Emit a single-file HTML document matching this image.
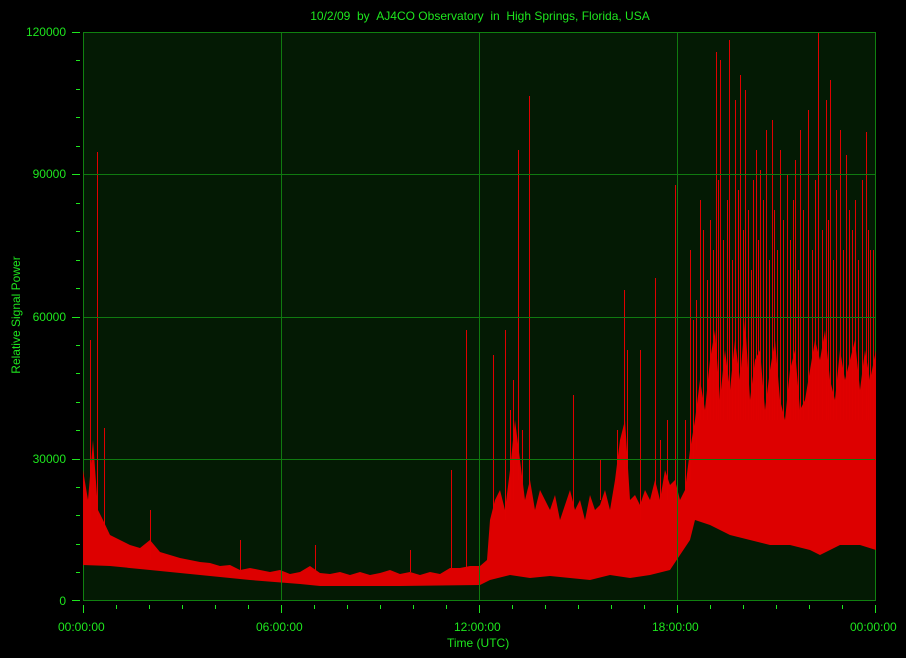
<!DOCTYPE html>
<html><head><meta charset="utf-8"><style>
html,body{margin:0;padding:0;background:#000;}
body{width:906px;height:658px;position:relative;overflow:hidden;font-family:"Liberation Sans",sans-serif;color:#1ee61e;font-size:12px;}
.t{position:absolute;white-space:nowrap;}
</style></head><body>
<svg width="906" height="658" style="position:absolute;left:0;top:0">
<rect x="83.5" y="32.5" width="792" height="568" fill="#041a04" stroke="#108010"/>
<polygon fill="#dd0000" points="83,470 88,500 93,440 98,510 103,520 110,535 120,540 130,545 140,548 150,540 160,552 170,555 180,558 190,560 200,562 210,563 220,566 230,565 240,570 250,568 260,570 270,572 280,570 290,574 300,572 310,566 320,573 330,574 340,572 350,575 360,572 370,575 380,573 390,570 400,574 410,572 420,575 430,572 440,574 450,568 460,568 470,566 480,566 487,560 490,520 495,500 500,490 505,510 510,470 515,420 520,460 525,500 530,480 535,510 540,490 545,500 550,510 555,495 560,520 565,505 570,490 575,510 580,500 585,520 590,495 595,510 600,505 605,490 610,510 615,480 620,440 625,420 630,500 635,495 640,505 645,490 650,500 655,480 660,500 665,470 670,485 675,480 680,500 685,490 690,450 695,420 700,380 705,410 710,360 715,330 720,400 725,350 730,390 735,340 740,380 745,320 750,400 755,360 760,350 765,410 770,370 775,340 780,400 785,420 790,370 795,350 800,410 805,400 810,370 815,340 820,360 825,330 830,380 835,400 840,350 845,380 850,360 855,340 860,390 865,350 870,380 876,350 876,550 860,545 840,545 820,555 810,550 790,545 770,545 750,540 730,535 710,525 695,520 690,540 680,555 670,570 650,575 630,578 610,575 590,580 570,578 550,576 530,578 510,575 490,580 480,585 400,586 320,586 300,584 250,580 200,575 150,570 110,566 83,565"/>
<path transform="translate(0.5,0)" stroke="#e00000" stroke-width="1" fill="none" d="M97 520V152M90 520V340M104 530V428M466 568V330M451 568V470M529 500V96M518 480V150M573 510V395M624 480V290M655 500V278M675 500V185M716 420V52M729 420V40M740 420V75M766 420V130M787 420V175M818 420V33M826 420V100M846 420V155M866 420V132M772 420V120M735 420V100M795 420V160M808 420V110M756 420V150M700 420V200M710 420V220M720 420V60M745 420V90M760 420V170M780 420V150M800 420V130M830 420V80M840 420V130M855 420V200M870 420V250M493 520V355M505 520V330M640 520V350M690 480V250M150 560V510M240 570V540M315 570V545M410 572V550
M703 420V230M707 420V280M713 420V250M718 420V180M723 420V240M727 420V200M732 420V260M738 420V190M743 420V230M748 420V210M751 420V270M753 420V180M758 420V240M763 420V200M769 420V260M774 420V210M777 420V250M783 420V220M790 420V240M793 420V200M798 420V270M803 420V210M812 420V250M815 420V180M822 420V230M828 420V220M833 420V260M836 420V190M843 420V250M849 420V210M852 420V230M858 420V260M862 420V180M868 420V230M873 420V250M696 450V300M693 460V320
M510 500V410M513 500V380M522 500V430M600 500V460M617 490V430M627 480V350M660 500V440M667 500V420M685 500V420"/>
<g stroke="#107a10" stroke-width="1">
<line x1="281.5" y1="33" x2="281.5" y2="600"/><line x1="479.5" y1="33" x2="479.5" y2="600"/><line x1="677.5" y1="33" x2="677.5" y2="600"/>
<line x1="84" y1="174.5" x2="875" y2="174.5"/><line x1="84" y1="317.5" x2="875" y2="317.5"/><line x1="84" y1="459.5" x2="875" y2="459.5"/>
</g>
<path stroke="#1ee61e" stroke-width="1" fill="none" d="M72 32.5H80M76 60.5H80M76 89.5H80M76 117.5H80M76 146.5H80M72 174.5H80M76 203.5H80M76 231.5H80M76 260.5H80M76 288.5H80M72 317.5H80M76 345.5H80M76 373.5H80M76 402.5H80M76 430.5H80M72 459.5H80M76 487.5H80M76 515.5H80M76 544.5H80M76 572.5H80M72 600.5H80
M83.5 605V613M116.5 605V609M149.5 605V609M182.5 605V609M215.5 605V609M248.5 605V609M281.5 605V613M314.5 605V609M347.5 605V609M380.5 605V609M413.5 605V609M446.5 605V609M479.5 605V613M512.5 605V609M545.5 605V609M578.5 605V609M611.5 605V609M644.5 605V609M677.5 605V613M710.5 605V609M743.5 605V609M776.5 605V609M809.5 605V609M842.5 605V609M875.5 605V613"/>
</svg>
<div class="t" style="left:0;width:960px;text-align:center;top:9px;">10/2/09 &nbsp;by &nbsp;AJ4CO Observatory &nbsp;in &nbsp;High Springs, Florida, USA</div>
<div class="t" style="right:840px;top:25px;">120000</div>
<div class="t" style="right:840px;top:167px;">90000</div>
<div class="t" style="right:840px;top:310px;">60000</div>
<div class="t" style="right:840px;top:452px;">30000</div>
<div class="t" style="right:840px;top:594px;">0</div>
<div class="t" style="left:16px;top:315px;transform:translate(-50%,-50%) rotate(-90deg);">Relative Signal Power</div>
<div class="t" style="left:58px;top:620px;">00:00:00</div>
<div class="t" style="left:256px;top:620px;">06:00:00</div>
<div class="t" style="left:454px;top:620px;">12:00:00</div>
<div class="t" style="left:652px;top:620px;">18:00:00</div>
<div class="t" style="left:850px;top:620px;">00:00:00</div>
<div class="t" style="left:447px;top:636px;">Time (UTC)</div>
</body></html>
